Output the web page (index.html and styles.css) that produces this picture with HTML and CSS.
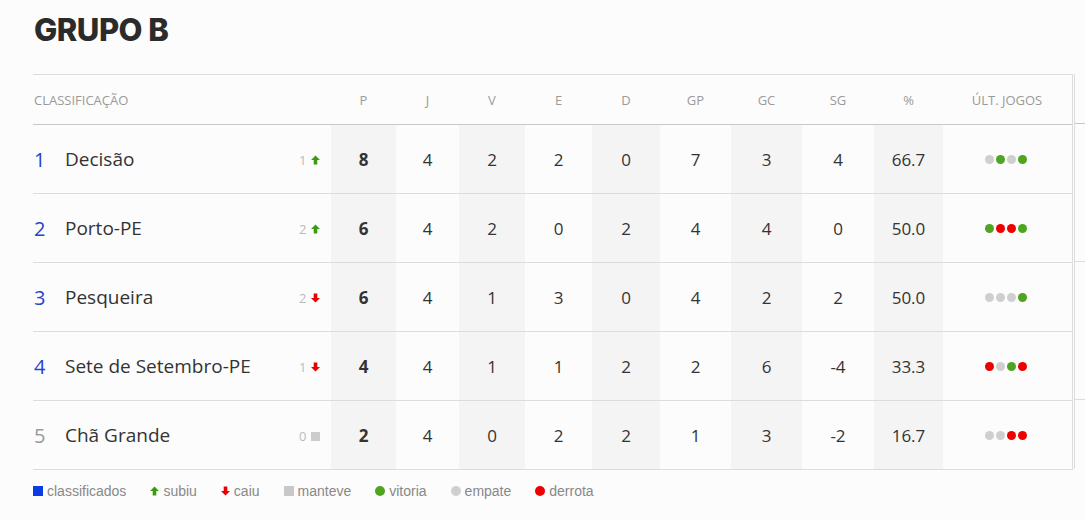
FILE: index.html
```html
<!DOCTYPE html>
<html lang="pt-BR">
<head>
<meta charset="utf-8">
<title>Grupo B</title>
<link rel="stylesheet" href="styles.css">
</head>
<body>
<div class="page">
  <h1 class="title">GRUPO B</h1>
  <div class="wrap">
    <div class="table">
      <div class="row head">
        <div class="c name">CLASSIFICAÇÃO</div>
        <div class="c">P</div><div class="c">J</div><div class="c">V</div><div class="c">E</div><div class="c">D</div>
        <div class="c">GP</div><div class="c">GC</div><div class="c">SG</div><div class="c">%</div><div class="c last">ÚLT. JOGOS</div>
      </div>

      <div class="row">
        <div class="c name"><span class="pos q">1</span><span class="team">Decisão</span><span class="var">1<svg class="ico" viewBox="0 0 10 10"><path d="M5 0 L10 5 L7 5 L7 10 L3 10 L3 5 L0 5 Z" fill="#3a9a12"/></svg></span></div>
        <div class="c sh b">8</div><div class="c">4</div><div class="c sh">2</div><div class="c">2</div><div class="c sh">0</div>
        <div class="c">7</div><div class="c sh">3</div><div class="c">4</div><div class="c sh">66.7</div>
        <div class="c last"><span class="dots"><i class="d e"></i><i class="d w"></i><i class="d e"></i><i class="d w"></i></span></div>
      </div>

      <div class="row">
        <div class="c name"><span class="pos q">2</span><span class="team">Porto-PE</span><span class="var">2<svg class="ico" viewBox="0 0 10 10"><path d="M5 0 L10 5 L7 5 L7 10 L3 10 L3 5 L0 5 Z" fill="#3a9a12"/></svg></span></div>
        <div class="c sh b">6</div><div class="c">4</div><div class="c sh">2</div><div class="c">0</div><div class="c sh">2</div>
        <div class="c">4</div><div class="c sh">4</div><div class="c">0</div><div class="c sh">50.0</div>
        <div class="c last"><span class="dots"><i class="d w"></i><i class="d l"></i><i class="d l"></i><i class="d w"></i></span></div>
      </div>

      <div class="row">
        <div class="c name"><span class="pos q">3</span><span class="team">Pesqueira</span><span class="var">2<svg class="ico" viewBox="0 0 10 10"><path d="M5 10 L10 5 L7 5 L7 0 L3 0 L3 5 L0 5 Z" fill="#e60000"/></svg></span></div>
        <div class="c sh b">6</div><div class="c">4</div><div class="c sh">1</div><div class="c">3</div><div class="c sh">0</div>
        <div class="c">4</div><div class="c sh">2</div><div class="c">2</div><div class="c sh">50.0</div>
        <div class="c last"><span class="dots"><i class="d e"></i><i class="d e"></i><i class="d e"></i><i class="d w"></i></span></div>
      </div>

      <div class="row">
        <div class="c name"><span class="pos q">4</span><span class="team">Sete de Setembro-PE</span><span class="var">1<svg class="ico" viewBox="0 0 10 10"><path d="M5 10 L10 5 L7 5 L7 0 L3 0 L3 5 L0 5 Z" fill="#e60000"/></svg></span></div>
        <div class="c sh b">4</div><div class="c">4</div><div class="c sh">1</div><div class="c">1</div><div class="c sh">2</div>
        <div class="c">2</div><div class="c sh">6</div><div class="c">-4</div><div class="c sh">33.3</div>
        <div class="c last"><span class="dots"><i class="d l"></i><i class="d e"></i><i class="d w"></i><i class="d l"></i></span></div>
      </div>

      <div class="row">
        <div class="c name"><span class="pos">5</span><span class="team">Chã Grande</span><span class="var">0<i class="sq"></i></span></div>
        <div class="c sh b">2</div><div class="c">4</div><div class="c sh">0</div><div class="c">2</div><div class="c sh">2</div>
        <div class="c">1</div><div class="c sh">3</div><div class="c">-2</div><div class="c sh">16.7</div>
        <div class="c last"><span class="dots"><i class="d e"></i><i class="d e"></i><i class="d l"></i><i class="d l"></i></span></div>
      </div>
    </div>
    <div class="next">
      <div class="nh"></div>
      <div class="nr"></div>
      <div class="nr"></div>
    </div>
  </div>

  <div class="legend">
    <span class="li"><i class="lsq blue"></i>classificados</span>
    <span class="li"><svg class="lico" viewBox="0 0 10 10"><path d="M5 0 L10 5 L7 5 L7 10 L3 10 L3 5 L0 5 Z" fill="#3a9a12"/></svg>subiu</span>
    <span class="li"><svg class="lico" viewBox="0 0 10 10"><path d="M5 10 L10 5 L7 5 L7 0 L3 0 L3 5 L0 5 Z" fill="#e60000"/></svg>caiu</span>
    <span class="li"><i class="lsq gray"></i>manteve</span>
    <span class="li"><i class="ldot w"></i>vitoria</span>
    <span class="li"><i class="ldot e"></i>empate</span>
    <span class="li"><i class="ldot l"></i>derrota</span>
  </div>
</div>
</body>
</html>
```

FILE: styles.css
```css
html, body {
  margin: 0;
  padding: 0;
  background: #fcfcfc;
}
.page {
  padding: 0 0 0 33px;
  font-family: "Open Sans", "Liberation Sans", sans-serif;
  color: #333;
}
.title {
  margin: 0;
  padding: 11px 0 0 1px;
  height: 74px;
  box-sizing: border-box;
  font-family: Inter, "Liberation Sans", sans-serif;
  font-weight: 800;
  font-size: 31px;
  line-height: 38px;
  letter-spacing: -0.5px;
  color: #2b2b2b;
}
.wrap {
  display: flex;
  align-items: flex-start;
}
.table {
  width: 1039px;
  border-top: 1px solid #dcdcdc;
  border-right: 1px solid #dcdcdc;
  display: flex;
  flex-direction: column;
}
.row {
  display: grid;
  grid-template-columns: 298px 65px 63px 66px 67px 68px 71px 71px 72px 69px 128px;
  height: 69px;
  box-sizing: border-box;
  border-bottom: 1px solid #dcdcdc;
}
.row.head {
  height: 50px;
  border-bottom: 1px solid #c8c8c8;
}
.c {
  display: flex;
  align-items: center;
  justify-content: center;
  font-size: 17px;
  color: #333;
}
.head .c {
  font-size: 13px;
  color: #9a9a9a;
}
.c.name {
  justify-content: flex-start;
  padding-left: 1px;
}
.c.sh { background: #f4f4f4; }
.c.b { font-weight: 700; }
.pos {
  width: 31px;
  font-size: 20px;
  color: #999;
}
.pos.q { color: #2443cf; }
.team {
  flex: 1;
  font-size: 19px;
  color: #333;
}
.var {
  display: flex;
  align-items: center;
  gap: 5px;
  width: 32px;
  font-size: 13px;
  color: #bbb;
  padding-top: 2px;
}
.ico { width: 9px; height: 10px; }
.sq {
  display: inline-block;
  width: 9px;
  height: 9px;
  background: #cccccc;
}
.dots {
  display: flex;
  gap: 2px;
  margin-left: -3px;
}
.d {
  display: block;
  width: 9px;
  height: 9px;
  border-radius: 50%;
}
.d.w { background: #4fa51f; }
.d.e { background: #cfcfcf; }
.d.l { background: #ee0000; }
.next {
  flex: 1;
  height: 395px;
  margin-left: 1px;
  border-left: 1px solid #dcdcdc;
}
.nh {
  height: 50px;
  box-sizing: border-box;
  border-bottom: 1px solid #c8c8c8;
}
.nr {
  height: 138px;
  box-sizing: border-box;
  border-bottom: 1px solid #dcdcdc;
}
.legend {
  display: flex;
  align-items: center;
  height: 42px;
  font-family: "Liberation Sans", Arial, sans-serif;
  font-size: 14px;
  color: #888;
}
.li {
  display: flex;
  align-items: center;
  gap: 4px;
  margin-right: 24px;
}
.lsq {
  display: inline-block;
  width: 10px;
  height: 10px;
}
.lsq.blue { background: #0a3ce6; }
.lsq.gray { background: #c8c8c8; }
.lico { width: 9px; height: 10px; }
.ldot {
  display: inline-block;
  width: 10px;
  height: 10px;
  border-radius: 50%;
}
.ldot.w { background: #4fa51f; }
.ldot.e { background: #cfcfcf; }
.ldot.l { background: #ee0000; }
```
